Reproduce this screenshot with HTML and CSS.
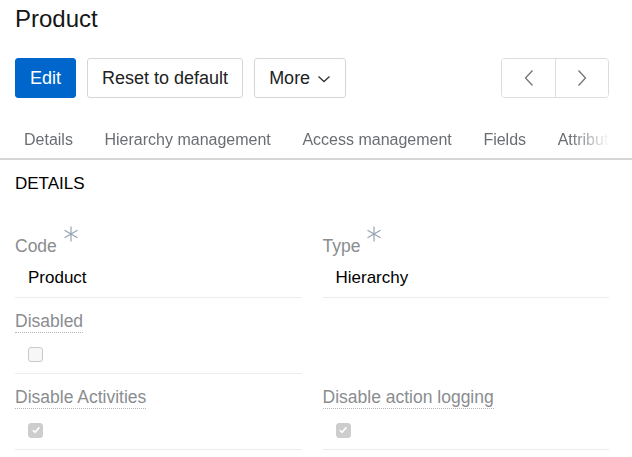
FILE: index.html
```html
<!DOCTYPE html>
<html lang="en">
<head>
    <meta charset="UTF-8">
    <meta name="viewport" content="width=device-width, initial-scale=1.0">
    <title>Product</title>
    <link rel="stylesheet" href="styles.css">
</head>
<body>
    <div class="page">
        <header class="page-header">
            <h1 class="title">Product</h1>
            <div class="toolbar">
                <div class="actions">
                    <button class="btn btn-primary">Edit</button>
                    <button class="btn">Reset to default</button>
                    <button class="btn">More
                        <svg class="caret" width="14" height="8" viewBox="0 0 14 8"><path d="M1.5 1.5 L7 6.5 L12.5 1.5" /></svg>
                    </button>
                </div>
                <div class="pager">
                    <button class="pager-btn">
                        <svg width="10" height="16" viewBox="0 0 10 16"><path d="M8.5 0.5 L1.5 8 L8.5 15.5" /></svg>
                    </button>
                    <button class="pager-btn">
                        <svg width="10" height="16" viewBox="0 0 10 16"><path d="M1.5 0.5 L8.5 8 L1.5 15.5" /></svg>
                    </button>
                </div>
            </div>
        </header>

        <nav class="tabs">
            <div class="tabs-list">
                <a class="tab">Details</a>
                <a class="tab">Hierarchy management</a>
                <a class="tab">Access management</a>
                <a class="tab">Fields</a>
                <a class="tab">Attributes</a>
            </div>
        </nav>

        <section class="details">
            <h2 class="section-title">DETAILS</h2>
            <div class="fields">
                <div class="field">
                    <div class="field-label">
                        <span class="label-text">Code</span>
                        <svg class="req" width="16" height="16" viewBox="0 0 16 16"><path d="M8 0.5 V15.5 M1.5 4.2 L14.5 11.8 M14.5 4.2 L1.5 11.8" /></svg>
                    </div>
                    <div class="field-value">Product</div>
                </div>
                <div class="field">
                    <div class="field-label">
                        <span class="label-text">Type</span>
                        <svg class="req" width="16" height="16" viewBox="0 0 16 16"><path d="M8 0.5 V15.5 M1.5 4.2 L14.5 11.8 M14.5 4.2 L1.5 11.8" /></svg>
                    </div>
                    <div class="field-value">Hierarchy</div>
                </div>

                <div class="field">
                    <div class="field-label">
                        <span class="label-text tip">Disabled</span>
                    </div>
                    <div class="field-value">
                        <span class="check"></span>
                    </div>
                </div>
                <div class="field empty"></div>

                <div class="field">
                    <div class="field-label">
                        <span class="label-text tip">Disable Activities</span>
                    </div>
                    <div class="field-value">
                        <span class="check checked">
                            <svg width="10" height="10" viewBox="0 0 10 10"><path d="M1.8 5.2 L4 7.4 L8.4 2.4" /></svg>
                        </span>
                    </div>
                </div>
                <div class="field">
                    <div class="field-label">
                        <span class="label-text tip">Disable action logging</span>
                    </div>
                    <div class="field-value">
                        <span class="check checked">
                            <svg width="10" height="10" viewBox="0 0 10 10"><path d="M1.8 5.2 L4 7.4 L8.4 2.4" /></svg>
                        </span>
                    </div>
                </div>
            </div>
        </section>
    </div>
</body>
</html>
```

FILE: styles.css
```css
* {
    box-sizing: border-box;
}

body {
    margin: 0;
    font-family: 'Liberation Sans', Arial, sans-serif;
    color: #151515;
    background: #fff;
    overflow: hidden;
}

.page-header {
    padding: 4px 23px 0 15px;
}

.title {
    margin: 0;
    font-size: 24px;
    line-height: 30px;
    font-weight: normal;
    color: #151515;
}

.toolbar {
    display: flex;
    justify-content: space-between;
    margin-top: 24px;
}

.actions {
    display: flex;
    gap: 11px;
}

.btn {
    display: flex;
    align-items: center;
    height: 40px;
    padding: 0 14px;
    font-family: inherit;
    font-size: 18px;
    color: #222;
    background: #fff;
    border: 1px solid #d6d6d6;
    border-radius: 3px;
}

.btn-primary {
    background: #0066cc;
    border-color: #0066cc;
    color: #fff;
}

.caret {
    margin-left: 7px;
    margin-top: 1px;
}

.caret path {
    fill: none;
    stroke: #333;
    stroke-width: 1.3;
}

.pager {
    display: flex;
    border: 1px solid #dcdcdc;
    border-radius: 4px;
    overflow: hidden;
}

.pager-btn {
    width: 53px;
    height: 38px;
    display: flex;
    align-items: center;
    justify-content: center;
    background: #fff;
    border: none;
    padding: 0;
}

.pager-btn + .pager-btn {
    border-left: 1px solid #dcdcdc;
}

.pager-btn path {
    fill: none;
    stroke: #707378;
    stroke-width: 1.3;
}

/* Tabs */
.tabs {
    margin-top: 20px;
    border-bottom: 2px solid #d6d6d6;
}

.tabs-list {
    display: flex;
    margin-right: 22px;
    padding-left: 8px;
    overflow: hidden;
    white-space: nowrap;
    -webkit-mask-image: linear-gradient(to right, #000 calc(100% - 40px), transparent 100%);
    mask-image: linear-gradient(to right, #000 calc(100% - 40px), transparent 100%);
}

.tab {
    flex: none;
    padding: 10px 15.8px 6px;
    font-size: 16px;
    line-height: 24px;
    color: #6a6e73;
}

.tab:first-child {
    padding-left: 16px;
}

/* Details */
.details {
    padding: 0 23px 0 15px;
}

.section-title {
    margin: 12px 0 26px;
    font-size: 17px;
    line-height: 24px;
    font-weight: normal;
    color: #000;
}

.fields {
    display: grid;
    grid-template-columns: 1fr 1fr;
    column-gap: 21px;
}

.field {
    padding-top: 13px;
    border-bottom: 1px solid #ececec;
}

.field.empty {
    border-bottom: none;
}

.field-label {
    display: flex;
    align-items: flex-start;
    height: 22px;
}

.label-text {
    font-size: 17.5px;
    line-height: 22px;
    color: #8a8d90;
}

.label-text.tip {
    line-height: 21px;
    border-bottom: 1px dotted #b4b7ba;
}

.req {
    margin-left: 6px;
    margin-top: -9px;
}

.req path {
    fill: none;
    stroke: #97a4b5;
    stroke-width: 1.2;
}

.field-value {
    display: flex;
    align-items: center;
    height: 40px;
    padding: 9px 13px 7px;
    font-size: 17px;
    line-height: 24px;
    color: #000;
}

.check {
    display: flex;
    align-items: center;
    justify-content: center;
    width: 15px;
    height: 15px;
    border: 1px solid #c9c9c9;
    border-radius: 3px;
    background: #f7f7f7;
}

.check.checked {
    background: #cdcdcd;
    border-color: #cdcdcd;
}

.check path {
    fill: none;
    stroke: #fff;
    stroke-width: 1.6;
}
```
